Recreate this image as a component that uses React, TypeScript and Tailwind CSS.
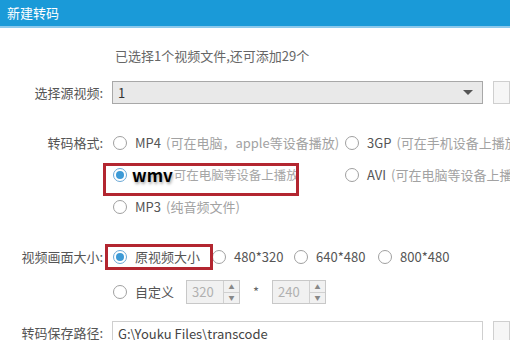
import React from 'react';

function Radio({ checked }: { checked?: boolean }) {
  return (
    <span
      className={
        checked
          ? 'flex h-[14px] w-[14px] shrink-0 items-center justify-center rounded-full border border-[#6aa8d6] bg-white'
          : 'flex h-[14px] w-[14px] shrink-0 items-center justify-center rounded-full border border-[#a0a0a0] bg-white'
      }
    >
      {checked && <span className="h-[8px] w-[8px] rounded-full bg-[#3d9ad6]" />}
    </span>
  );
}

function Option({ name, note, checked }: { name: string; note?: string; checked?: boolean }) {
  return (
    <div className="flex items-center whitespace-nowrap">
      <Radio checked={checked} />
      <span className="ml-[8px] text-[#555]">{name}</span>
      {note && <span className="ml-[5px] text-[#a2a2a2]">{note}</span>}
    </div>
  );
}

function Spinner({ value }: { value: string }) {
  return (
    <div className="flex h-[24px] w-[54px] border border-[#c8c8c8] bg-[#f1f1f1]">
      <span className="flex-1 pl-[5px] leading-[22px] text-[#b0b0b0]">{value}</span>
      <div className="flex w-[16px] flex-col border-l border-[#d0d0d0]">
        <span className="flex flex-1 items-center justify-center border-b border-[#d0d0d0] text-[6px] text-[#888]">▲</span>
        <span className="flex flex-1 items-center justify-center text-[6px] text-[#888]">▼</span>
      </div>
    </div>
  );
}

function Label({ children }: { children: React.ReactNode }) {
  return <div className="w-[103px] shrink-0 text-right text-[#555]">{children}</div>;
}

export default function App() {
  return (
    <div className="h-[340px] w-[510px] overflow-hidden bg-white font-['Noto_Sans_CJK_SC',sans-serif] text-[13px]">
      {/* title bar */}
      <div className="flex h-[28px] items-center border-b-2 border-[#8cc9ec] bg-[#1a9ad8] pl-[7px] text-[13px] text-white">
        新建转码
      </div>

      <div className="pl-[115px] pt-[19px] leading-[18px] text-[#666]">已选择1个视频文件,还可添加29个</div>

      {/* source */}
      <div className="mt-[16px] flex h-[23px] items-center">
        <Label>选择源视频:</Label>
        <div className="ml-[9px] flex h-[23px] w-[371px] items-center justify-between border border-[#a8a8a8] bg-[#e9e9e9] pl-[5px] pr-[9px] text-[#333]">
          <span>1</span>
          <span className="h-0 w-0 border-x-[5px] border-t-[5px] border-x-transparent border-t-[#555]" />
        </div>
        <div className="ml-[10px] h-[23px] flex-1 border border-[#cfcfcf] bg-[#f6f6f6]" />
      </div>

      {/* format */}
      <div className="mt-[23px] flex">
        <div className="flex h-[32px] items-center">
          <Label>转码格式:</Label>
        </div>
        <div className="ml-[10px] grid grid-cols-[232px_1fr]">
          <div className="flex h-[32px] items-center">
            <Option name="MP4" note="(可在电脑，apple等设备播放)" />
          </div>
          <div className="flex h-[32px] items-center">
            <Option name="3GP" note="(可在手机设备上播放" />
          </div>
          <div className="relative flex h-[32px] items-center">
            <div className="absolute left-[-10px] top-[4px] h-[33px] w-[196px] border-[3px] border-[#b32630]" />
            <Radio checked />
            <span className="ml-[5px] text-[17px] font-bold text-black [text-shadow:1px_2px_3px_rgba(0,0,0,0.35)]">wmv</span>
            <span className="ml-[1px] whitespace-nowrap text-[12.5px] text-[#a6a6a6]">可在电脑等设备上播放</span>
          </div>
          <div className="flex h-[32px] items-center">
            <Option name="AVI" note="(可在电脑等设备上播放" />
          </div>
          <div className="flex h-[32px] items-center">
            <Option name="MP3" note="(纯音频文件)" />
          </div>
        </div>
      </div>

      {/* size */}
      <div className="mt-[17px] flex">
        <div className="flex h-[34px] items-center">
          <Label>视频画面大小:</Label>
        </div>
        <div className="ml-[10px] flex flex-col">
          <div className="flex h-[34px] items-center">
            <div className="relative flex w-[99px] items-center">
              <div className="absolute left-[-8px] top-1/2 h-[26px] w-[108px] -translate-y-1/2 border-[3px] border-[#b32630]" />
              <Option name="原视频大小" checked />
            </div>
            <div className="w-[82px]">
              <Option name="480*320" />
            </div>
            <div className="w-[84px]">
              <Option name="640*480" />
            </div>
            <Option name="800*480" />
          </div>
          <div className="flex h-[36px] items-center">
            <div className="w-[73px]">
              <Option name="自定义" />
            </div>
            <Spinner value="320" />
            <span className="w-[32px] text-center text-[#666]">*</span>
            <Spinner value="240" />
          </div>
        </div>
      </div>

      {/* path */}
      <div className="mt-[11px] flex items-start">
        <div className="pt-[3px] leading-[18px]">
          <Label>转码保存路径:</Label>
        </div>
        <div className="ml-[9px] h-[26px] w-[371px] border border-[#cfcfcf] bg-white pl-[5px] pt-[2px] text-[#444]">
          G:\Youku Files\transcode
        </div>
        <div className="ml-[10px] h-[26px] flex-1 border border-[#cfcfcf] bg-[#f6f6f6]" />
      </div>
    </div>
  );
}
